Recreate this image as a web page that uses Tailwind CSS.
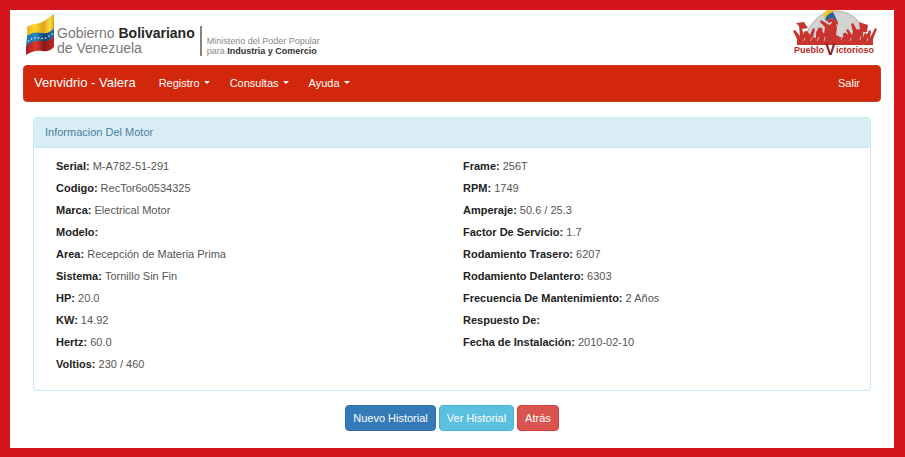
<!DOCTYPE html>
<html lang="es">
<head>
<meta charset="utf-8">
<meta name="viewport" content="width=device-width, initial-scale=1">
<title>Venvidrio - Valera</title>
<script src="https://cdn.jsdelivr.net/npm/@tailwindcss/browser@4"></script>
</head>
<body class="min-h-screen bg-white border-t-10 border-l-10 border-r-11 border-b-9 border-[#d3151b] px-[13px] font-['Liberation_Sans',sans-serif] text-[11px] leading-4 text-[#555]">
  <header class="flex h-[55px] items-start justify-between">
    <div class="flex items-start pt-1 pl-0.5">
      <svg class="h-[42px] w-[30px]" viewBox="0 0 30 42" aria-hidden="true">
        <defs>
          <linearGradient id="y" x1="0" x2="1"><stop offset="0" stop-color="#e9b21c"/><stop offset=".3" stop-color="#fbd62a"/><stop offset=".6" stop-color="#dca21a"/><stop offset=".85" stop-color="#fbdc3c"/><stop offset="1" stop-color="#d9a51c"/></linearGradient>
          <linearGradient id="b" x1="0" x2="1"><stop offset="0" stop-color="#1a6fae"/><stop offset=".35" stop-color="#2489c4"/><stop offset=".65" stop-color="#13436f"/><stop offset="1" stop-color="#1e6ca8"/></linearGradient>
          <linearGradient id="r" x1="0" x2="1"><stop offset="0" stop-color="#a51f1d"/><stop offset=".35" stop-color="#d93a30"/><stop offset=".65" stop-color="#8f1717"/><stop offset="1" stop-color="#c42a25"/></linearGradient>
        </defs>
        <path fill="url(#y)" d="M2 13C6 10 11 10 15 9C21 7 25 2 29 0V16C26 20 22 22 17 21C12 20 7 20 2 24Z"/>
        <path fill="url(#b)" d="M2 22C7 18 12 18 17 19C22 20 26 18 29 14V23C26 27 22 29 17 28C12 27 6 28 1 33Z"/>
        <path fill="url(#r)" d="M1 32C6 27 12 26 17 27C22 28 26 26 29 22V33C25 37 22 38 17 37C11 36 6 38 1 41Z"/>
        <g fill="#fff"><circle cx="3.500" cy="27" r=".8"/><circle cx="6.500" cy="25" r=".8"/><circle cx="10" cy="24" r=".8"/><circle cx="13.500" cy="24" r=".8"/><circle cx="17" cy="24.500" r=".8"/><circle cx="20.500" cy="24" r=".8"/><circle cx="24" cy="22" r=".8"/><circle cx="27" cy="20" r=".8"/></g>
      </svg>
      <p class="mt-3 ml-0.5 text-[14px] leading-[15px] text-[#777]">Gobierno <b class="text-[#262626]">Bolivariano</b><br>de Venezuela</p>
      <p class="mt-3 ml-[5px] border-l-2 border-[#8a7f7f] pt-2.5 pl-[5px] text-[9px] leading-[10px] text-[#888]">Ministerio del Poder Popular<br>para <b class="text-[#333]">Industria y Comercio</b></p>
    </div>
    <svg class="mr-0.5 h-[50px] w-[86px]" viewBox="0 0 86 50" role="img" aria-label="Pueblo Victorioso">
      <path fill="#d2d2d2" stroke="#999" stroke-width=".7" d="M11 34C14 14 27 1 43 1S73 14 75 34Z"/>
      <path fill="#c9342f" d="M4 35L4 29L0 21L2 20L7 26L6 16L3 13L11 12L15 18L9 19L11 25Q15 21 17 25L20 18L22 19L20 27L23 28L23 22Q26 17 30 22L31 24L32 17L27 12L28 10L36 15L38 14Q40 10 43 12L44 18L43 25L47 27L51 27L55 24L53 20L55 19L59 25L60 22L58 14L60 13L64 20L67 19L66 12L75 15L74 22L70 22L70 27L74 25L76 20L78 21L77 28L82 18L84 19L80 29L80 35Z"/>
      <g fill="#c9342f"><circle cx="13" cy="23.500" r="2.400"/><circle cx="27" cy="20" r="2.500"/><circle cx="52" cy="25" r="2.200"/><circle cx="64" cy="22" r="2.400"/><circle cx="73" cy="26" r="2.400"/></g>
      <path fill="none" stroke="#e4c9c8" stroke-width=".8" d="M10 31L12 28M17 31L20 27M24 31L26 27M31 31L32 27M48 30L49 27M57 31L58 28M67 30L68 26M74 31L75 28"/>
      <path fill="#f2c42c" d="M30 4L34 0H43L40 2Q34 4 32 10Z"/>
      <path fill="#23649b" d="M32 10Q33 4 40 2Q43 8 45 12Q38 5 34 11Z"/>
      <path fill="#c9342f" d="M34 11Q38 5 45 12L45 15Q40 10 36 13Z"/>
      <g fill="#b52b27" font-family="'Liberation Sans',sans-serif" font-weight="700"><text x="1" y="43" font-size="9">Pueblo</text><text x="32" y="45" font-size="16" fill="#8f201e">V</text><text x="43" y="43" font-size="9">ictorioso</text></g>
    </svg>
  </header>

  <nav class="flex h-[37px] items-center rounded-sm border border-[#c93a20] bg-[#d2270c] px-2.5 pb-0.5 text-white">
    <a href="#" class="mr-[13px] text-[13px]">Venvidrio - Valera</a>
    <button type="button" class="flex items-center gap-1 px-2.5">Registro<span class="border-x-3 border-t-3 border-x-transparent border-t-white"></span></button>
    <button type="button" class="flex items-center gap-1 px-2.5">Consultas<span class="border-x-3 border-t-3 border-x-transparent border-t-white"></span></button>
    <button type="button" class="flex items-center gap-1 px-2.5">Ayuda<span class="border-x-3 border-t-3 border-x-transparent border-t-white"></span></button>
    <a href="#" class="ml-auto px-2.5">Salir</a>
  </nav>

  <main class="px-2.5 pt-[15px]">
    <section class="rounded-sm border border-[#c5eaf1]">
      <h1 class="rounded-t-sm border-b border-[#c5eaf1] bg-[#d9edf7] px-[11px] pt-1.5 pb-[7px] text-[#4a7f9b]">Informacion Del Motor</h1>
      <div class="grid grid-cols-2 pt-[7px] pb-[15px] pl-[22px] leading-[22px] [&_dt]:inline [&_dt]:font-bold [&_dt]:text-[#222] [&_dd]:inline">
        <dl>
          <div><dt>Serial:</dt> <dd>M-A782-51-291</dd></div>
          <div><dt>Codigo:</dt> <dd>RecTor6o0534325</dd></div>
          <div><dt>Marca:</dt> <dd>Electrical Motor</dd></div>
          <div><dt>Modelo:</dt> <dd></dd></div>
          <div><dt>Area:</dt> <dd>Recepción de Materia Prima</dd></div>
          <div><dt>Sistema:</dt> <dd>Tornillo Sin Fin</dd></div>
          <div><dt>HP:</dt> <dd>20.0</dd></div>
          <div><dt>KW:</dt> <dd>14.92</dd></div>
          <div><dt>Hertz:</dt> <dd>60.0</dd></div>
          <div><dt>Voltios:</dt> <dd>230 / 460</dd></div>
        </dl>
        <dl>
          <div><dt>Frame:</dt> <dd>256T</dd></div>
          <div><dt>RPM:</dt> <dd>1749</dd></div>
          <div><dt>Amperaje:</dt> <dd>50.6 / 25.3</dd></div>
          <div><dt>Factor De Servicio:</dt> <dd>1.7</dd></div>
          <div><dt>Rodamiento Trasero:</dt> <dd>6207</dd></div>
          <div><dt>Rodamiento Delantero:</dt> <dd>6303</dd></div>
          <div><dt>Frecuencia De Mantenimiento:</dt> <dd>2 Años</dd></div>
          <div><dt>Respuesto De:</dt> <dd></dd></div>
          <div><dt>Fecha de Instalación:</dt> <dd>2010-02-10</dd></div>
        </dl>
      </div>
    </section>
    <div class="mt-[14px] flex justify-center gap-[3px] text-white">
      <button type="button" class="rounded-sm border border-[#2e6da4] bg-[#337ab7] px-[7px] py-1">Nuevo Historial</button>
      <button type="button" class="rounded-sm border border-[#46b8da] bg-[#5bc0de] px-[7px] py-1">Ver Historial</button>
      <button type="button" class="rounded-sm border border-[#d43f3a] bg-[#d9534f] px-[7px] py-1">Atrás</button>
    </div>
  </main>
</body>
</html>
